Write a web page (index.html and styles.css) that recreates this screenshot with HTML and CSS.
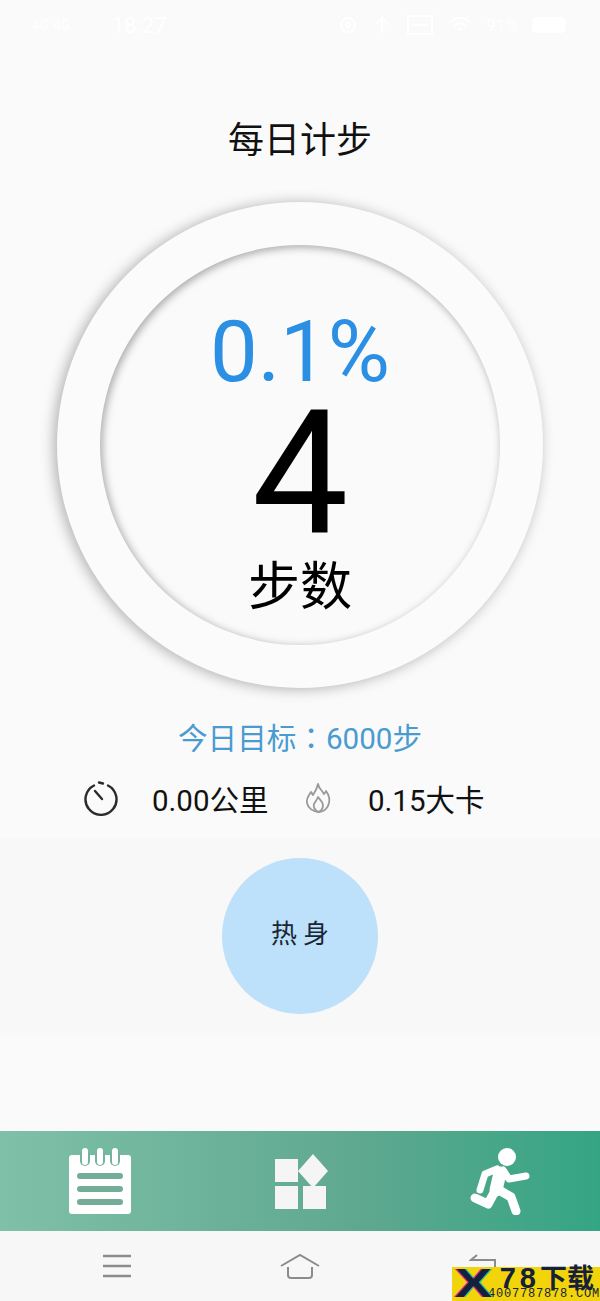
FILE: index.html
```html
<!DOCTYPE html>
<html lang="zh-CN">
<head>
  <meta charset="UTF-8" />
  <meta name="viewport" content="width=device-width, initial-scale=1" />
  <title>每日计步</title>
  <link rel="stylesheet" href="styles.css">
</head>
<body>
  <div class="phone">
    <div class="status-bar">
      <div class="status-left">
        <span class="signal">4G 4G</span>
        <span class="clock">18:27</span>
      </div>
      <div class="status-right">
        <svg width="20" height="20" viewBox="0 0 20 20" fill="none" stroke="#fff" stroke-width="2"><circle cx="10" cy="10" r="7"/><circle cx="10" cy="10" r="2"/></svg>
        <svg width="20" height="20" viewBox="0 0 20 20" fill="none" stroke="#fff" stroke-width="2"><path d="M10 2v16M4 10l6-8 6 8"/></svg>
        <svg width="28" height="22" viewBox="0 0 28 22" fill="none" stroke="#fff" stroke-width="2"><rect x="2" y="2" width="24" height="18"/><path d="M6 11h16"/></svg>
        <svg width="24" height="20" viewBox="0 0 24 20" fill="none" stroke="#fff" stroke-width="2"><path d="M2 7q10-8 20 0M6 11q6-5 12 0M10 15q2-2 4 0"/></svg>
        <span class="battery-text">91%</span>
        <span class="battery"></span>
      </div>
    </div>

    <h1 class="title">每日计步</h1>

    <div class="ring">
      <div class="ring-inner">
        <div class="percent">0.1%</div>
        <div class="steps">4</div>
        <div class="steps-label">步数</div>
      </div>
    </div>

    <div class="goal">今日目标<span class="goal-colon" lang="zh-TW">：</span>6000步</div>

    <div class="stats">
      <svg class="stat-clock" width="36" height="36" viewBox="0 0 36 36" fill="none" stroke="#2b2b2b" stroke-width="2.4" stroke-linecap="round">
        <path d="M11 5.5a15.5 15.5 0 1 0 14 0"/>
        <path d="M16 2.5l4 1"/>
        <path d="M12 11l7 8"/>
      </svg>
      <span class="stat-text">0.00公里</span>
      <svg class="stat-flame" width="28" height="32" viewBox="0 0 28 32" fill="none" stroke="#9a9a9a" stroke-width="1.8" stroke-linejoin="round">
        <path d="M14 2c1 5 4 6 6 10 1-1 2-2 2-3 3 4 4 8 3 12-1 5-5 9-10 9-6 0-11-4-12-9-1-5 2-8 4-11 1 1 1 2 2 3 2-3 4-6 5-11z"/>
        <path d="M14 30c-3-2-5-5-4-8 1-2 3-4 4-7 2 3 5 5 5 8 0 3-2 6-5 7z"/>
      </svg>
      <span class="stat-text">0.15大卡</span>
    </div>

    <div class="warmup-band">
      <button class="warmup">热 身</button>
    </div>

    <div class="spacer"></div>

    <nav class="tabs">
      <a class="tab" href="#notes">
        <svg width="62" height="66" viewBox="0 0 62 66" fill="none" stroke-linecap="round">
          <rect y="7" width="62" height="59" rx="3" fill="#fff"/>
          <g stroke="#74b49d" stroke-width="10">
            <path d="M16 7v6"/>
            <path d="M31 7v6"/>
            <path d="M46 7v6"/>
          </g>
          <g stroke="#fff" stroke-width="6">
            <path d="M16 3v11"/>
            <path d="M31 3v11"/>
            <path d="M46 3v11"/>
          </g>
          <g stroke="#73ad98" stroke-width="6">
            <path d="M11 28h40"/>
            <path d="M11 41h40"/>
            <path d="M11 54h40"/>
          </g>
        </svg>
      </a>
      <a class="tab" href="#apps">
        <svg width="58" height="56" viewBox="0 0 58 56" fill="#f5f5f5">
          <rect x="4" y="6" width="23" height="23"/>
          <path d="M42 1l15 17-15 17-15-17z"/>
          <rect x="4" y="33" width="23" height="23"/>
          <rect x="32" y="33" width="23" height="23"/>
        </svg>
      </a>
      <a class="tab" href="#run">
        <svg width="60" height="68" viewBox="0 0 60 68" fill="none" stroke="#fff" stroke-linecap="round" stroke-linejoin="round">
          <circle cx="37" cy="10" r="9" fill="#fff" stroke="none"/>
          <path stroke-width="13" d="M30 26l-4 17"/>
          <path stroke-width="7" d="M27 22l-12 5-5 16"/>
          <path stroke-width="7" d="M33 23l6 9 17-3"/>
          <path stroke-width="9" d="M25 44l-7 13-13-6"/>
          <path stroke-width="9" d="M29 43l12 7 5 14"/>
        </svg>
      </a>
    </nav>

    <div class="system-bar">
      <svg width="28" height="24" viewBox="0 0 28 24" stroke="#8c8c8c" stroke-width="2.4"><path d="M0 2h28M0 12h28M0 22h28"/></svg>
      <svg class="home-icon" width="40" height="26" viewBox="0 0 40 26" fill="none" stroke="#8c8c8c" stroke-width="2"><path d="M1 13L20 2l19 11"/><path d="M8 14v8a3 3 0 0 0 3 3h18a3 3 0 0 0 3-3v-8"/></svg>
      <svg width="28" height="24" viewBox="0 0 28 24" fill="none" stroke="#8c8c8c" stroke-width="2"><path d="M8 1L2 6l6 0M2 6h24v16"/></svg>
    </div>

    <div class="watermark">
      <span class="wm-x">X</span>
      <span class="wm-big"><span class="wm-num">78</span>下载</span>
      <span class="wm-small">4007787878.COM</span>
    </div>
  </div>
</body>
</html>
```

FILE: styles.css
```css
html, body {
  margin: 0;
  padding: 0;
}

body {
  font-family: Roboto, "Noto Sans CJK SC", sans-serif;
  background-color: #fafafa;
  color: #000;
}

.phone {
  position: relative;
  width: 600px;
  height: 1301px;
  display: flex;
  flex-direction: column;
  align-items: center;
  overflow: hidden;
}

.status-bar {
  width: 100%;
  height: 50px;
  box-sizing: border-box;
  padding: 0 34px 0 32px;
  display: flex;
  justify-content: space-between;
  align-items: center;
  color: #fff;
  font-size: 22px;
  flex-shrink: 0;
}

.status-left, .status-right {
  display: flex;
  align-items: center;
  gap: 14px;
}

.signal {
  width: 66px;
  font-size: 14px;
}

.battery-text {
  font-size: 17px;
}

.battery {
  display: block;
  width: 34px;
  height: 16px;
  border-radius: 5px;
  background-color: #fff;
}

.title {
  margin: 61px 0 0 0;
  height: 60px;
  line-height: 60px;
  font-size: 36px;
  font-weight: 400;
  color: #111;
}

.ring {
  margin-top: 31px;
  width: 486px;
  height: 486px;
  border-radius: 50%;
  background-color: #fbfbfb;
  box-shadow: -3px 1px 14px rgba(0,0,0,0.3);
  display: flex;
  justify-content: center;
  align-items: center;
  flex-shrink: 0;
}

.ring-inner {
  width: 400px;
  height: 400px;
  border-radius: 50%;
  background-color: #fafafa;
  box-shadow: inset 2px 2px 8px rgba(0,0,0,0.35);
  display: flex;
  flex-direction: column;
  align-items: center;
}

.percent {
  margin-top: 57px;
  height: 100px;
  line-height: 100px;
  font-size: 85px;
  color: #2b8fe3;
}

.steps {
  height: 130px;
  line-height: 130px;
  margin-top: 7px;
  font-size: 172px;
  color: #000;
}

.steps-label {
  height: 64px;
  line-height: 64px;
  margin-top: 17px;
  font-size: 52px;
  color: #000;
}

.goal {
  margin-top: 29px;
  height: 40px;
  line-height: 40px;
  font-size: 29.6px;
  color: #4a9bd0;
}

.goal-colon {
  font-family: "Noto Sans CJK TC", sans-serif;
}

.stats {
  margin-top: 21px;
  width: 100%;
  height: 40px;
  box-sizing: border-box;
  padding-left: 83px;
  display: flex;
  align-items: center;
  font-size: 29.5px;
  color: #111;
}

.stat-clock {
  margin-right: 33px;
}

.stat-flame {
  margin: 0 36px 0 36px;
}

.stat-text {
  width: 116px;
  white-space: nowrap;
}

.warmup-band {
  margin-top: 20px;
  width: 100%;
  height: 197px;
  background-color: #f8f8f8;
  display: flex;
  justify-content: center;
  align-items: center;
}

.warmup {
  width: 156px;
  height: 156px;
  border: none;
  border-radius: 50%;
  background-color: #bde0fb;
  color: #1a2733;
  font-family: "Noto Sans CJK SC", sans-serif;
  font-size: 26px;
  padding: 0 0 10px 0;
  margin-top: -1px;
}

.spacer {
  flex: 1;
}

.tabs {
  width: 100%;
  height: 100px;
  background: linear-gradient(to right, #7fc0a8, #5fa890 60%, #34a583);
  display: grid;
  grid-template-columns: repeat(3, 1fr);
  align-items: center;
  justify-items: center;
  flex-shrink: 0;
}

.tab {
  display: flex;
}

.system-bar {
  width: 100%;
  height: 70px;
  box-sizing: border-box;
  padding: 0 103px;
  background-color: #f7f7f7;
  display: flex;
  justify-content: space-between;
  align-items: center;
  flex-shrink: 0;
}

/* site stamp that sits over the system bar */
.watermark {
  position: absolute;
  right: 0;
  bottom: 0;
  width: 148px;
  height: 34px;
  background-color: #f2d40a;
  color: #14213a;
  display: flex;
  flex-direction: column;
  align-items: flex-end;
}

.wm-x {
  position: absolute;
  left: 8px;
  top: -7px;
  font-family: "Liberation Sans", sans-serif;
  font-weight: 700;
  font-size: 40px;
  line-height: 46px;
  transform: scaleX(1.4);
  text-shadow: -1px 0 #e0318a, 1px 0 #28c6d8;
}

.wm-big {
  padding-right: 6px;
  height: 20px;
  font-family: "Liberation Sans", "Noto Sans CJK SC", sans-serif;
  font-weight: 700;
  font-size: 27px;
  line-height: 22px;
  white-space: nowrap;
}

.wm-num {
  font-size: 29px;
  letter-spacing: 4px;
}

.wm-small {
  font-family: "Liberation Mono", monospace;
  font-size: 12px;
  line-height: 14px;
  letter-spacing: 0.8px;
  white-space: nowrap;
}
```
